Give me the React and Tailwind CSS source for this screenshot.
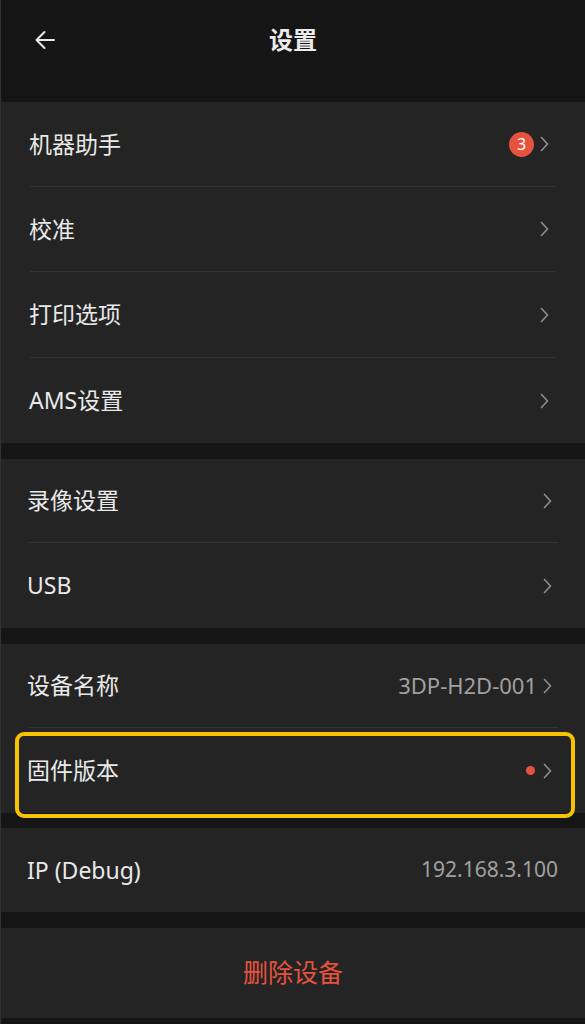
const font = { fontFamily: '"Noto Sans", "Noto Sans CJK SC", sans-serif' };

function Chevron() {
  return (
    <svg width="9" height="16" viewBox="0 0 9 16" className="ml-[6px] shrink-0">
      <path d="M1.5 1.5 L7.5 8 L1.5 14.5" fill="none" stroke="#8c8c8c" strokeWidth="1.7" strokeLinecap="round" strokeLinejoin="round" />
    </svg>
  );
}

function Row({ label, right, chevron = true, divider = false, inset = 'px-[27px]', height = 'h-[85px]', trail = 'mr-[6px]' }) {
  return (
    <div className={inset}>
      <div className={`flex items-center justify-between ${height} ${divider ? 'border-b border-[#333333]' : ''}`}>
        <span className="text-[23px] text-[#e9e9e9] -ml-[1px]">{label}</span>
        <div className={`flex items-center ${chevron ? trail : ''}`}>
          {right}
          {chevron && <Chevron />}
        </div>
      </div>
    </div>
  );
}

export default function App() {
  return (
    <div className="w-[585px] h-[1024px] bg-[#151515] border-l border-[#333333] overflow-hidden" style={font}>
      {/* Header */}
      <div className="relative h-[102px] flex items-start justify-center pt-[20px]">
        <button className="absolute left-[33px] top-[30px]">
          <svg width="22" height="20" viewBox="0 0 22 20">
            <path d="M20 10 H2.5 M10.5 2 L2.5 10 L10.5 18" fill="none" stroke="#e8e8e8" strokeWidth="2" strokeLinecap="round" strokeLinejoin="round" />
          </svg>
        </button>
        <h1 className="text-[24px] font-bold text-[#ececec] leading-[40px]">设置</h1>
      </div>

      {/* Group 1 */}
      <div className="bg-[#242424]">
        <Row
          inset="px-[29px]"
          label="机器助手"
          divider
          trail="mr-[7px]"
          right={
            <span className="w-[25px] h-[25px] rounded-full bg-[#e5533f] text-white text-[16px] flex items-center justify-center leading-none">3</span>
          }
        />
        <Row inset="px-[29px]" trail="mr-[7px]" label="校准" divider />
        <Row inset="px-[29px]" trail="mr-[7px]" label="打印选项" divider height="h-[86px]" />
        <Row inset="px-[29px]" trail="mr-[7px]" label="AMS设置" />
      </div>

      <div className="h-[16px]" />

      {/* Group 2 */}
      <div className="bg-[#242424]">
        <Row label="录像设置" divider height="h-[84px]" />
        <Row label="USB" />
      </div>

      <div className="h-[16px]" />

      {/* Group 3 */}
      <div className="bg-[#242424]">
        <Row
          label="设备名称"
          divider
          height="h-[84px]"
          right={<span className="text-[22px] text-[#a0a0a0]">3DP-H2D-001</span>}
        />
        <div className="relative">
          <Row
            label="固件版本"
            height="h-[85px]"
            right={<span className="w-[9px] h-[9px] rounded-full bg-[#e5533f] mr-[2px]" />}
          />
          {/* highlight outline */}
          <div className="absolute left-[14px] right-[10px] top-[4px] -bottom-[5px] border-[4px] border-[#f7c200] rounded-[9px] pointer-events-none" />
        </div>
      </div>

      <div className="h-[15px]" />

      {/* IP */}
      <div className="bg-[#242424]">
        <Row
          label="IP (Debug)"
          chevron={false}
          height="h-[84px]"
          right={<span className="text-[21px] text-[#a0a0a0]">192.168.3.100</span>}
        />
      </div>

      <div className="h-[16px]" />

      {/* Delete */}
      <div className="bg-[#242424] h-[90px] flex items-center justify-center">
        <span className="text-[25px] text-[#e5533f]">删除设备</span>
      </div>
    </div>
  );
}
